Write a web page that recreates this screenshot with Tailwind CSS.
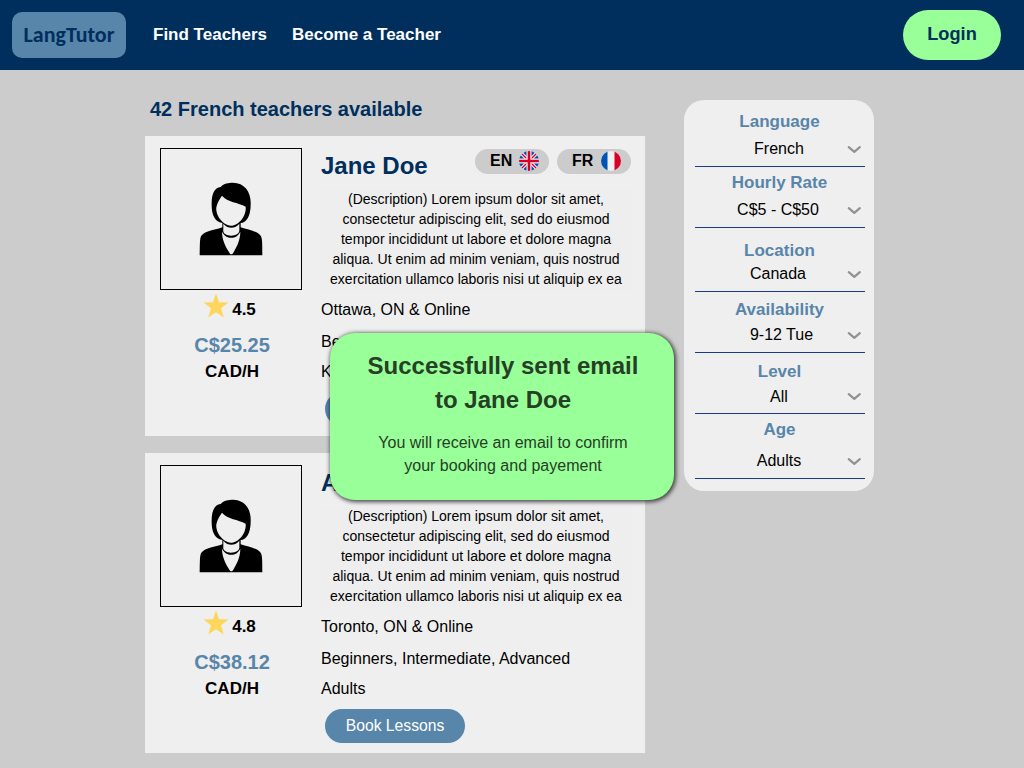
<!DOCTYPE html>
<html lang="en">
<head>
<meta charset="utf-8">
<title>LangTutor</title>
<script src="https://cdn.jsdelivr.net/npm/@tailwindcss/browser@4"></script>
</head>
<body class="relative h-[768px] w-[1024px] overflow-hidden bg-[#ccc] font-['Liberation_Sans',Arial,sans-serif] text-base text-black">

<svg class="hidden" xmlns="http://www.w3.org/2000/svg">
  <symbol id="person" viewBox="-87 -78 420 420">
    <path d="M92 36 C102 25 116 23 129 23 C164 23 184 52 182 88 C182 116 174 138 158 143 L152 144 L152 157 C174 165 200 167 212 182 C217 190 217 204 217 241 L29 241 C30 204 29 190 34 182 C46 167 76 165 97 157 L97 144 C72 140 64 116 65 84 C65 58 73 38 92 36 Z"/>
    <path fill="#efefef" d="M96 62 C113 82 144 82 167 95 C170 122 146 152 123 152 C100 152 76 122 79 97 C82 83 89 72 96 62 Z"/>
    <path fill="#efefef" d="M100 146 C108 155 116 158 124 158 C132 158 140 155 148 146 L148 162 C150 176 137 182 123 182 C110 182 97 176 100 162 Z"/>
    <path fill="#efefef" d="M96 170 C103 183 112 188 124 188 C136 188 144 183 151 170 C151 197 138 220 128 236 Q124 239 120 236 C106 215 96 193 96 170 Z"/>
  </symbol>
  <symbol id="star" viewBox="0 0 26 26">
    <path fill="#ffd65c" d="M13 .5 16.1 9.3 25.5 9.5 18 15.3 20.8 24.6 13 19.2 5.2 24.6 8 15.3 .5 9.5 9.9 9.3Z"/>
  </symbol>
  <symbol id="chev" viewBox="0 0 14 8">
    <path fill="none" stroke="#929292" stroke-width="2.2" stroke-linecap="round" stroke-linejoin="round" d="M1.8 1.2 7.3 5.9 12.8 1.2"/>
  </symbol>
</svg>

<header class="flex h-[70px] items-center bg-[#002f5d] pl-3 pr-[23px] font-bold text-white">
  <div class="flex h-[46px] w-[114px] items-center justify-center rounded-[10px] bg-[#5885aa] pb-px font-['Carlito','Lato',sans-serif] text-[22px] text-[#002f5d]">LangTutor</div>
  <nav class="ml-[27px] flex gap-[25px] text-[17px]"><a>Find Teachers</a><a>Become a Teacher</a></nav>
  <button class="ml-auto h-[50px] w-[98px] rounded-[25px] bg-[#99ff99] text-[18.2px] font-bold text-[#002f5d]">Login</button>
</header>

<div class="flex items-start pl-[145px]">
  <main class="w-[500px]">
    <h1 class="h-[66px] pl-[5px] pt-6 text-[20px] leading-[30px] font-bold text-[#002f5d]">42 French teachers available</h1>

    <article class="mb-[17px] flex h-[300px] bg-[#efefef] pl-[15px] pt-3">
      <div class="w-[142px] text-center font-bold">
        <div class="h-[142px] border border-black"><svg class="size-full"><use href="#person"/></svg></div>
        <div class="mt-[3px] flex h-[26px] justify-center gap-[3px] pr-[3px] text-[17px] leading-[33px]"><svg class="size-[26px]"><use href="#star"/></svg>4.5</div>
        <div class="mt-[11px] pl-[2px] text-[20px] leading-[30px] text-[#5885aa]">C$25.25</div>
        <div class="mt-px pl-[2px] text-[17px] leading-[22px]">CAD/H</div>
      </div>
      <div class="ml-[19px] w-[310px]">
        <div class="flex h-[42px] justify-between">
          <h2 class="text-[24px] leading-9 font-bold text-[#002f5d]">Jane Doe</h2>
          <div class="mt-[1px] flex gap-2 font-bold leading-[23px]">
            <div class="flex h-[25px] w-[74px] items-center rounded-full bg-[#ccc] pb-px pl-[15px]"><span class="w-[29px] pb-[2px]">EN</span>
              <svg class="size-5 rounded-full" viewBox="0 0 20 20"><path fill="#f0f0f0" d="M0 0h20v20H0z"/><path fill="#0052b4" d="M8 0v5.5L3 0.5V0zM12 0v5.5L17 .5V0zM0 8h5.5L.8 3.2 0 4zM20 8h-5.5l4.7-4.8.8.8zM0 12h5.5L.8 16.8 0 16zM20 12h-5.5l4.7 4.8.8-.8zM8 20v-5.5l-5 5v.5zM12 20v-5.5l5 5v.5z"/><path stroke="#d80027" stroke-width="1.4" d="m2 2 6 6m10-6-6 6M2 18l6-6m10 6-6-6"/><path fill="#f0f0f0" d="M7.5 0h5v20h-5zM0 7.5h20v5H0z"/><path fill="#d80027" d="M8.7 0h2.6v8.7H20v2.6h-8.7V20H8.7v-8.7H0V8.7h8.7z"/></svg>
            </div>
            <div class="flex h-[25px] w-[74px] items-center rounded-full bg-[#ccc] pb-px pl-[15px]"><span class="w-[29px] pb-[2px]">FR</span>
              <svg class="size-5 rounded-full" viewBox="0 0 20 20"><path fill="#f0f0f0" d="M0 0h20v20H0z"/><path fill="#0052b4" d="M0 0h6.5v20H0z"/><path fill="#d80027" d="M13.5 0H20v20h-6.5z"/></svg>
            </div>
          </div>
        </div>
        <p class="h-[100px] bg-[#eee] text-center text-[14px] leading-5"><span class="relative -top-px">(Description) Lorem ipsum dolor sit amet,<br>consectetur adipiscing elit, sed do eiusmod<br>tempor incididunt ut labore et dolore magna<br>aliqua. Ut enim ad minim veniam, quis nostrud<br>exercitation ullamco laboris nisi ut aliquip ex ea</span></p>
        <div class="mt-2 leading-6">Ottawa, ON &amp; Online</div>
        <div class="mt-2 leading-6">Beginners, Intermediate</div>
        <div class="mt-[6px] leading-6">Kids</div>
        <button class="ml-1 mt-2 h-[34px] w-[140px] rounded-full bg-[#5885aa] text-[15.7px] text-white">Book Lessons</button>
      </div>
    </article>

    <article class="flex h-[300px] bg-[#efefef] pl-[15px] pt-3">
      <div class="w-[142px] text-center font-bold">
        <div class="h-[142px] border border-black"><svg class="size-full"><use href="#person"/></svg></div>
        <div class="mt-[3px] flex h-[26px] justify-center gap-[3px] pr-[3px] text-[17px] leading-[33px]"><svg class="size-[26px]"><use href="#star"/></svg>4.8</div>
        <div class="mt-[11px] pl-[2px] text-[20px] leading-[30px] text-[#5885aa]">C$38.12</div>
        <div class="mt-px pl-[2px] text-[17px] leading-[22px]">CAD/H</div>
      </div>
      <div class="ml-[19px] w-[310px]">
        <h2 class="h-[42px] text-[24px] leading-9 font-bold text-[#002f5d]">Alex</h2>
        <p class="h-[100px] bg-[#eee] text-center text-[14px] leading-5"><span class="relative -top-px">(Description) Lorem ipsum dolor sit amet,<br>consectetur adipiscing elit, sed do eiusmod<br>tempor incididunt ut labore et dolore magna<br>aliqua. Ut enim ad minim veniam, quis nostrud<br>exercitation ullamco laboris nisi ut aliquip ex ea</span></p>
        <div class="mt-2 leading-6">Toronto, ON &amp; Online</div>
        <div class="mt-2 leading-6">Beginners, Intermediate, Advanced</div>
        <div class="mt-[6px] leading-6">Adults</div>
        <button class="ml-1 mt-2 h-[34px] w-[140px] rounded-full bg-[#5885aa] text-[15.7px] text-white">Book Lessons</button>
      </div>
    </article>
  </main>

  <aside class="ml-[39px] mt-[30px] h-[391px] w-[190px] rounded-[20px] bg-[#efefef] pl-[10.5px] pr-[9.5px] text-center leading-6">
    <section class="flex h-[67px] flex-col justify-end border-b border-[#1a3a8a]">
      <h3 class="mb-[3px] text-[17px] font-bold text-[#5885aa]">Language</h3>
      <div class="mb-[5px] flex items-center pl-[17px] pr-[4px]"><span class="flex-1">French</span><svg class="mt-0.5 h-2 w-3.5"><use href="#chev"/></svg></div>
    </section>
    <section class="flex h-[61px] flex-col justify-end border-b border-[#1a3a8a]">
      <h3 class="mb-[3px] text-[17px] font-bold text-[#5885aa]">Hourly Rate</h3>
      <div class="mb-[5px] flex items-center pl-[15px] pr-[4px]"><span class="flex-1">C$5 - C$50</span><svg class="mt-0.5 h-2 w-3.5"><use href="#chev"/></svg></div>
    </section>
    <section class="flex h-[64px] flex-col justify-end border-b border-[#1a3a8a]">
      <h3 class="-mb-px text-[17px] font-bold text-[#5885aa]">Location</h3>
      <div class="mb-[5px] flex items-center pl-[15px] pr-[4px]"><span class="flex-1">Canada</span><svg class="mt-0.5 h-2 w-3.5"><use href="#chev"/></svg></div>
    </section>
    <section class="flex h-[61px] flex-col justify-end border-b border-[#1a3a8a]">
      <h3 class="mb-px text-[17px] font-bold text-[#5885aa]">Availability</h3>
      <div class="mb-[5px] flex items-center pl-[22px] pr-[4px]"><span class="flex-1">9-12 Tue</span><svg class="mt-0.5 h-2 w-3.5"><use href="#chev"/></svg></div>
    </section>
    <section class="flex h-[61px] flex-col justify-end border-b border-[#1a3a8a]">
      <h3 class="mb-px text-[17px] font-bold text-[#5885aa]">Level</h3>
      <div class="mb-[4px] flex items-center pl-[17px] pr-[4px]"><span class="flex-1">All</span><svg class="h-2 w-3.5"><use href="#chev"/></svg></div>
    </section>
    <section class="flex h-[65px] flex-col justify-end border-b border-[#1a3a8a]">
      <h3 class="mb-[7px] text-[17px] font-bold text-[#5885aa]">Age</h3>
      <div class="mb-[5px] flex items-center pl-[17px] pr-[4px]"><span class="flex-1">Adults</span><svg class="mt-0.5 h-2 w-3.5"><use href="#chev"/></svg></div>
    </section>
  </aside>
</div>

<div role="status" class="absolute left-[330px] top-[333px] h-[167px] w-[344px] rounded-[25px] bg-[#99ff99] pl-[2px] pt-4 text-center text-[#264026] shadow-[1px_1px_4px_1px_rgba(0,0,0,0.7)]">
  <h2 class="text-[24px] leading-[34px] font-bold">Successfully sent email<br>to Jane Doe</h2>
  <p class="mt-[14px] leading-[23px]">You will receive an email to confirm<br>your booking and payement</p>
</div>
</body>
</html>
